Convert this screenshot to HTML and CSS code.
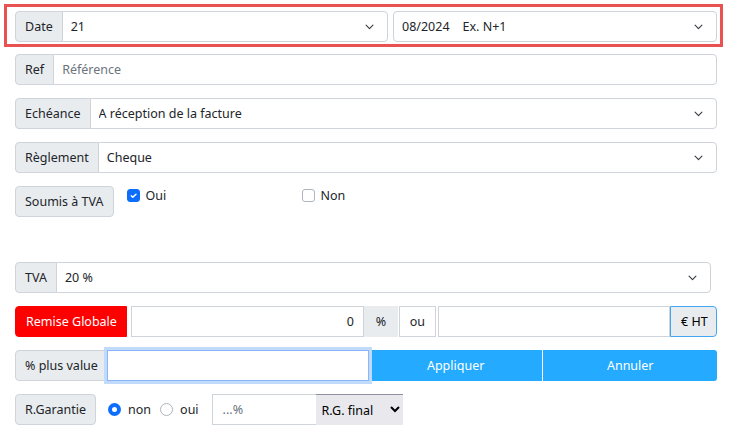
FILE: index.html
```html
<!DOCTYPE html>
<html lang="fr">
<head>
    <meta charset="UTF-8">
    <title>Facture</title>
    <link rel="stylesheet" href="styles.css">
</head>
<body>
    <div class="page">
        <div class="highlight">
            <div class="row-split">
                <div class="group group-date">
                    <span class="addon">Date</span>
                    <select class="field select"><option>21</option></select>
                </div>
                <select class="field select solo"><option>08/2024&nbsp;&nbsp;&nbsp; Ex. N+1</option></select>
            </div>
        </div>

        <div class="group row">
            <span class="addon">Ref</span>
            <input class="field" type="text" placeholder="Référence">
        </div>

        <div class="group row">
            <span class="addon">Echéance</span>
            <select class="field select"><option>A réception de la facture</option></select>
        </div>

        <div class="group row">
            <span class="addon">Règlement</span>
            <select class="field select"><option>Cheque</option></select>
        </div>

        <div class="row row-tva">
            <button class="button button-gray">Soumis à TVA</button>
            <label class="check check-oui"><span class="box box-on">
                <svg width="9" height="9" viewBox="0 0 20 20"><path d="M5 10.5l3.5 3.5 7-7" fill="none" stroke="#fff" stroke-width="3.2" stroke-linecap="round" stroke-linejoin="round"/></svg>
            </span>Oui</label>
            <label class="check"><span class="box"></span>Non</label>
        </div>

        <div class="group row group-taux">
            <span class="addon">TVA</span>
            <select class="field select"><option>20 %</option></select>
        </div>

        <div class="group row">
            <span class="addon addon-red">Remise Globale</span>
            <input class="field field-num" type="text" value="0">
            <span class="addon addon-flat">%</span>
            <span class="cell-ou">ou</span>
            <input class="field field-ht" type="text">
            <span class="addon addon-ht">€ HT</span>
        </div>

        <div class="group row">
            <span class="addon">% plus value</span>
            <input class="field field-focus" type="text">
            <button class="button button-blue">Appliquer</button>
            <button class="button button-blue button-last">Annuler</button>
        </div>

        <div class="row row-garantie">
            <button class="button button-gray">R.Garantie</button>
            <label class="radio"><span class="dot dot-on"></span>non</label>
            <label class="radio"><span class="dot"></span>oui</label>
            <input class="field field-rg" type="text" placeholder="...%">
            <select class="native"><option>R.G. final</option></select>
        </div>
    </div>
</body>
</html>
```

FILE: styles.css
```css
body {
    margin: 0;
    font-family: "Noto Sans", Arial, sans-serif;
    font-size: 12.5px;
    color: #212529;
    background: #fff;
}
.page {
    width: 702px;
    padding: 0 0 0 15px;
}
.highlight {
    margin: 4px -6px 7px -11px;
    border: 3px solid #ea5252;
    padding: 4px 3px 2px 8px;
}
.row-split {
    display: flex;
    gap: 5px;
}
.group {
    display: flex;
    height: 31px;
}
.group-date {
    flex: 0 0 373px;
}
.row {
    margin-bottom: 13px;
}
.addon {
    display: flex;
    align-items: center;
    padding: 0 9px;
    background: #e9ecef;
    border: 1px solid #ced4da;
    border-radius: 4px 0 0 4px;
    white-space: nowrap;
}
.field {
    flex: 1;
    min-width: 0;
    height: 31px;
    box-sizing: border-box;
    margin: 0 0 0 -1px;
    padding: 0 8px;
    border: 1px solid #ced4da;
    border-radius: 0 4px 4px 0;
    font: inherit;
    color: #212529;
    background: #fff;
    outline: none;
}
.field::placeholder {
    color: #6c757d;
}
.select {
    appearance: none;
    padding-right: 30px;
    background: #fff url("data:image/svg+xml,%3csvg xmlns='http://www.w3.org/2000/svg' viewBox='0 0 16 16'%3e%3cpath fill='none' stroke='%23343a40' stroke-width='1.6' stroke-linecap='round' stroke-linejoin='round' d='M3 6l5 5 5-5'/%3e%3c/svg%3e") no-repeat right 12px center / 11px 11px;
}
.solo {
    margin: 0;
    border-radius: 4px;
}
.group-taux {
    width: 696px;
}
.row-tva {
    display: flex;
    align-items: flex-start;
    margin-bottom: 45px;
}
.button {
    font: inherit;
    cursor: pointer;
    height: 31px;
    padding: 0 9px;
}
.button-gray {
    background: #e9ecef;
    border: 1px solid #ced4da;
    border-radius: 4px;
    color: #212529;
}
.check {
    display: flex;
    align-items: center;
    margin-top: 2px;
    height: 14px;
}
.check-oui {
    margin-left: 13px;
    width: 175px;
}
.box {
    display: flex;
    align-items: center;
    justify-content: center;
    width: 13px;
    height: 13px;
    box-sizing: border-box;
    border: 1px solid #adb5bd;
    border-radius: 3px;
    margin-right: 6px;
    background: #fff;
}
.box-on {
    background: #0d6efd;
    border-color: #0d6efd;
}
.addon-red {
    background: #ff0000;
    border-color: #ff0000;
    color: #fff;
    padding: 0 9px 0 10px;
}
.field-num {
    margin-left: 4px;
    text-align: right;
    border-radius: 0;
    padding-right: 9px;
    flex: 0 0 233px;
}
.addon-flat {
    border-color: #e9ecef;
    border-radius: 0;
    width: 34px;
    box-sizing: border-box;
    justify-content: center;
    padding: 0;
}
.cell-ou {
    display: flex;
    align-items: center;
    justify-content: center;
    width: 37px;
    box-sizing: border-box;
    margin-left: 1px;
    border: 1px solid #ced4da;
}
.field-ht {
    margin-left: 2px;
    border-radius: 0;
}
.addon-ht {
    border: 1px solid #41a7f5;
    border-radius: 0 4px 4px 0;
    padding: 0 0 0 10px;
    width: 47px;
    box-sizing: border-box;
    color: #000;
}
.field-focus {
    flex: 0 0 262px;
    border-color: #86b7fe;
    border-radius: 0;
    box-shadow: 0 0 0 3px #c2dbfc;
    position: relative;
}
.button-blue {
    flex: 1;
    background: #24aaff;
    border: none;
    color: #fff;
    border-radius: 0;
    padding: 0;
}
.button-last {
    margin-left: 1px;
    border-radius: 0 3px 3px 0;
}
.row-garantie {
    display: flex;
    align-items: center;
}
.radio {
    display: flex;
    align-items: center;
    margin-left: 12px;
}
.radio + .radio {
    margin-left: 9px;
}
.dot {
    width: 13px;
    height: 13px;
    box-sizing: border-box;
    border: 1px solid #adb5bd;
    border-radius: 50%;
    margin-right: 7px;
    background: #fff;
}
.dot-on {
    border: 4px solid #0d6efd;
}
.field-rg {
    flex: 0 0 105px;
    margin-left: 13px;
    border-radius: 0;
    padding-left: 10px;
}
.native {
    height: 31px;
    width: 87px;
    margin-left: -1px;
    font: inherit;
    color: #000;
    background: #e9e9ed;
    border: none;
    border-top: 1px solid #8f8f9d;
    padding: 0 2px;
}
```
